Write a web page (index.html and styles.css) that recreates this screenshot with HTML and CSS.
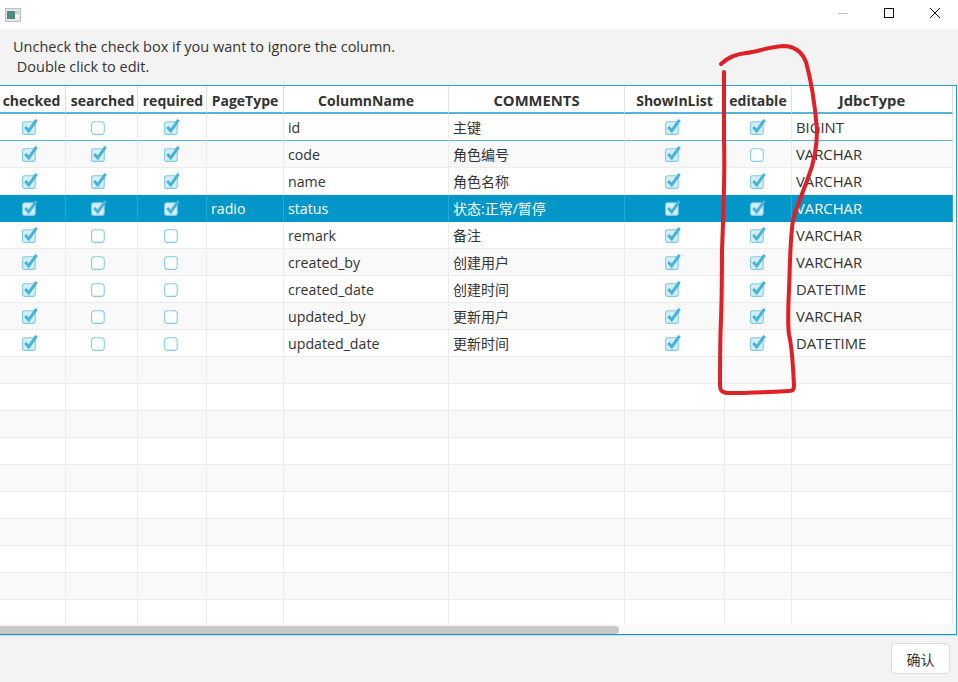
FILE: index.html
```html
<!DOCTYPE html>
<html lang="zh">
<head>
<meta charset="utf-8">
<title>Columns</title>
<link rel="stylesheet" href="styles.css">
</head>
<body>
<svg class="defs" width="0" height="0" aria-hidden="true">
  <symbol id="cb-on" viewBox="0 0 18 18">
    <rect class="box" x="1.5" y="3.5" width="12" height="12" rx="2"/>
    <path class="tick" d="M4 8.6 L7.3 12.2 L14.8 1.8"/>
  </symbol>
  <symbol id="cb-off" viewBox="0 0 18 18">
    <rect class="box-off" x="1.5" y="3.5" width="12" height="12" rx="3"/>
  </symbol>
</svg>
<div class="window">
  <header class="titlebar">
    <svg class="app-icon" width="16" height="14" viewBox="0 0 16 14">
      <rect x="0.5" y="0.5" width="15" height="13" fill="#e6e6e6" stroke="#bdbdbd"/>
      <rect x="2" y="3" width="8" height="8" fill="#4d8a80"/>
      <rect x="10" y="3" width="4" height="3" fill="#c5d3da"/>
      <rect x="10" y="7" width="4" height="4" fill="#f4f4f4"/>
    </svg>
    <div class="win-controls">
      <svg width="12" height="12" viewBox="0 0 12 12"><path d="M1 6.5H11" stroke="#c4c4c4"/></svg>
      <svg width="12" height="12" viewBox="0 0 12 12"><rect x="1.5" y="1.5" width="9" height="9" fill="none" stroke="#111"/></svg>
      <svg width="12" height="12" viewBox="0 0 12 12"><path d="M1 1L11 11M11 1L1 11" stroke="#111" fill="none"/></svg>
    </div>
  </header>
  <p class="message">Uncheck the check box if you want to ignore the column.<br>&nbsp;Double click to edit.</p>
  <section class="frame">
    <div class="viewport">
      <table class="grid">
        <colgroup>
          <col class="c1"><col class="c2"><col class="c3"><col class="c4"><col class="c5"><col class="c6"><col class="c7"><col class="c8"><col class="c9">
        </colgroup>
        <thead>
          <tr><th>checked</th><th>searched</th><th>required</th><th>PageType</th><th>ColumnName</th><th>COMMENTS</th><th>ShowInList</th><th>editable</th><th>JdbcType</th></tr>
        </thead>
        <tbody>
          <tr class="first"><td class="ck"><svg><use href="#cb-on"/></svg></td><td class="ck"><svg><use href="#cb-off"/></svg></td><td class="ck"><svg><use href="#cb-on"/></svg></td><td></td><td>id</td><td>主键</td><td class="ck"><svg><use href="#cb-on"/></svg></td><td class="ck"><svg><use href="#cb-on"/></svg></td><td>BIGINT</td></tr>
          <tr><td class="ck"><svg><use href="#cb-on"/></svg></td><td class="ck"><svg><use href="#cb-on"/></svg></td><td class="ck"><svg><use href="#cb-on"/></svg></td><td></td><td>code</td><td>角色编号</td><td class="ck"><svg><use href="#cb-on"/></svg></td><td class="ck"><svg><use href="#cb-off"/></svg></td><td>VARCHAR</td></tr>
          <tr><td class="ck"><svg><use href="#cb-on"/></svg></td><td class="ck"><svg><use href="#cb-on"/></svg></td><td class="ck"><svg><use href="#cb-on"/></svg></td><td></td><td>name</td><td>角色名称</td><td class="ck"><svg><use href="#cb-on"/></svg></td><td class="ck"><svg><use href="#cb-on"/></svg></td><td>VARCHAR</td></tr>
          <tr class="selected"><td class="ck"><svg><use href="#cb-on"/></svg></td><td class="ck"><svg><use href="#cb-on"/></svg></td><td class="ck"><svg><use href="#cb-on"/></svg></td><td>radio</td><td>status</td><td>状态:正常/暂停</td><td class="ck"><svg><use href="#cb-on"/></svg></td><td class="ck"><svg><use href="#cb-on"/></svg></td><td>VARCHAR</td></tr>
          <tr><td class="ck"><svg><use href="#cb-on"/></svg></td><td class="ck"><svg><use href="#cb-off"/></svg></td><td class="ck"><svg><use href="#cb-off"/></svg></td><td></td><td>remark</td><td>备注</td><td class="ck"><svg><use href="#cb-on"/></svg></td><td class="ck"><svg><use href="#cb-on"/></svg></td><td>VARCHAR</td></tr>
          <tr><td class="ck"><svg><use href="#cb-on"/></svg></td><td class="ck"><svg><use href="#cb-off"/></svg></td><td class="ck"><svg><use href="#cb-off"/></svg></td><td></td><td>created_by</td><td>创建用户</td><td class="ck"><svg><use href="#cb-on"/></svg></td><td class="ck"><svg><use href="#cb-on"/></svg></td><td>VARCHAR</td></tr>
          <tr><td class="ck"><svg><use href="#cb-on"/></svg></td><td class="ck"><svg><use href="#cb-off"/></svg></td><td class="ck"><svg><use href="#cb-off"/></svg></td><td></td><td>created_date</td><td>创建时间</td><td class="ck"><svg><use href="#cb-on"/></svg></td><td class="ck"><svg><use href="#cb-on"/></svg></td><td>DATETIME</td></tr>
          <tr><td class="ck"><svg><use href="#cb-on"/></svg></td><td class="ck"><svg><use href="#cb-off"/></svg></td><td class="ck"><svg><use href="#cb-off"/></svg></td><td></td><td>updated_by</td><td>更新用户</td><td class="ck"><svg><use href="#cb-on"/></svg></td><td class="ck"><svg><use href="#cb-on"/></svg></td><td>VARCHAR</td></tr>
          <tr><td class="ck"><svg><use href="#cb-on"/></svg></td><td class="ck"><svg><use href="#cb-off"/></svg></td><td class="ck"><svg><use href="#cb-off"/></svg></td><td></td><td>updated_date</td><td>更新时间</td><td class="ck"><svg><use href="#cb-on"/></svg></td><td class="ck"><svg><use href="#cb-on"/></svg></td><td>DATETIME</td></tr>
          <tr><td></td><td></td><td></td><td></td><td></td><td></td><td></td><td></td><td></td></tr>
          <tr><td></td><td></td><td></td><td></td><td></td><td></td><td></td><td></td><td></td></tr>
          <tr><td></td><td></td><td></td><td></td><td></td><td></td><td></td><td></td><td></td></tr>
          <tr><td></td><td></td><td></td><td></td><td></td><td></td><td></td><td></td><td></td></tr>
          <tr><td></td><td></td><td></td><td></td><td></td><td></td><td></td><td></td><td></td></tr>
          <tr><td></td><td></td><td></td><td></td><td></td><td></td><td></td><td></td><td></td></tr>
          <tr><td></td><td></td><td></td><td></td><td></td><td></td><td></td><td></td><td></td></tr>
          <tr><td></td><td></td><td></td><td></td><td></td><td></td><td></td><td></td><td></td></tr>
          <tr><td></td><td></td><td></td><td></td><td></td><td></td><td></td><td></td><td></td></tr>
          <tr><td></td><td></td><td></td><td></td><td></td><td></td><td></td><td></td><td></td></tr>
        </tbody>
      </table>
    </div>
    <div class="scrollbar"><div class="thumb"></div></div>
  </section>
  <footer class="actions"><button class="confirm" type="button">确认</button></footer>
  <svg class="annotation" width="958" height="682" viewBox="0 0 958 682" aria-hidden="true">
    <path d="M721 64C727 58 737 54 746 53C757 52 768 47 783 46C795 46 802 52 806 62C811 80 815 105 817 130C817 150 812 168 808 178C802 195 796 208 793 220C790 240 790 265 789 290C788 310 788 327 789 335C792 345 793 365 794 385C794 390 793 391 789 391C770 392 745 393 727 393C721 392 720 390 720 385C720 360 720 340 721 320C722 290 722 270 722 250C724 200 725 170 724 140C724 115 724 90 724 72" fill="none"/>
  </svg>
</div>
</body>
</html>
```
FILE: styles.css
```css
* { box-sizing: border-box; }
html, body { margin: 0; padding: 0; }
body { width: 958px; height: 682px; overflow: hidden; background: #f3f3f3; font-family: "Open Sans", "Noto Sans CJK SC", sans-serif; font-size: 14.5px; color: #333; }
.defs { position: absolute; }
.window { position: relative; display: flex; flex-direction: column; height: 682px; }
.titlebar { flex: none; height: 29px; background: #fff; display: flex; align-items: center; justify-content: space-between; padding: 0 17px 0 5px; }
.app-icon { display: block; }
.win-controls { display: flex; gap: 34px; margin-top: -3px; }
.win-controls svg { display: block; }
.message { flex: none; height: 56px; margin: 0; padding: 8px 13px 0; line-height: 20px; color: #333; }
.frame { flex: none; height: 550px; margin-right: 1px; background: #f9f9f9; border-top: 1px solid #2ba3cf; border-right: 1px solid #2ba3cf; border-bottom: 1px solid #1d93bb; display: flex; flex-direction: column; box-shadow: 0 1px 1px #bfe6f4; }
.viewport { flex: none; height: 538px; overflow: hidden; background: #fff; }
.grid { table-layout: fixed; width: 953px; border-collapse: separate; border-spacing: 0; }
.c1 { width: 66px; } .c2 { width: 72px; } .c3 { width: 69px; } .c4 { width: 77px; } .c5 { width: 165px; } .c6 { width: 176px; } .c7 { width: 100px; } .c8 { width: 67px; } .c9 { width: 161px; }
th { height: 28px; padding: 2px 0 0; font-size: 14px; font-weight: 700; text-align: center; white-space: nowrap; background: #fff; color: #333; border-right: 1px solid #dedede; border-bottom: 2px solid #58b4d4; }
th:nth-child(1) { padding-right: 2px; }
th:nth-child(2), th:nth-child(3) { padding-left: 2px; }
th:nth-child(6), th:nth-child(9) { font-size: 14.8px; }
td { height: 27px; padding: 1px 0 0 4px; font-size: 14.2px; line-height: 25px; white-space: nowrap; border-right: 1px solid #ececec; border-bottom: 1px solid #ececec; color: #333; vertical-align: middle; }
td:nth-child(6) { font-size: 14px; }
td:nth-child(9) { font-size: 14.8px; }
tbody tr:nth-child(even) td { background: #f9f9f9; }
tbody tr.first td { border-bottom: 1px solid #58b4d4; height: 26px; }
.ck { padding: 0; text-align: center; line-height: 0; }
.ck svg { display: inline-block; width: 19px; height: 19px; vertical-align: middle; margin-left: -2px; }
td:nth-child(1) svg, td:nth-child(2) svg { margin-left: -4px; }
td:nth-child(3) svg, td:nth-child(8) svg { margin-left: 0; }
.box { fill: #d6edf6; stroke: #7fcbe4; stroke-width: 1; }
.box-off { fill: #fff; stroke: #7fcbe4; stroke-width: 1; }
.tick { fill: none; stroke: #45b4da; stroke-width: 2.8; }
tbody tr.selected td { background: #0296c9; color: #fff; border-right-color: #27a8d6; border-bottom-color: #0296c9; }
.selected .box { fill: #d9f0f8; stroke: #e8f6fb; }
.selected .tick { stroke: #5cc0e0; }
.scrollbar { flex: none; height: 10px; padding-top: 2px; }
.thumb { width: 619px; height: 8px; background: #c8c8c8; border-radius: 0 4px 4px 0; }
.actions { flex: 1; display: flex; justify-content: flex-end; align-items: flex-start; padding: 8px 8px 0 0; }
.confirm { width: 59px; height: 31px; padding: 0; background: #fff; border: 1px solid #dcdcdc; border-radius: 4px; font: 14px "Noto Sans CJK SC", sans-serif; color: #333; }
.annotation { position: absolute; left: 0; top: 0; pointer-events: none; }
.annotation path { stroke: #df2027; stroke-width: 4; stroke-linecap: round; stroke-linejoin: round; }
```
